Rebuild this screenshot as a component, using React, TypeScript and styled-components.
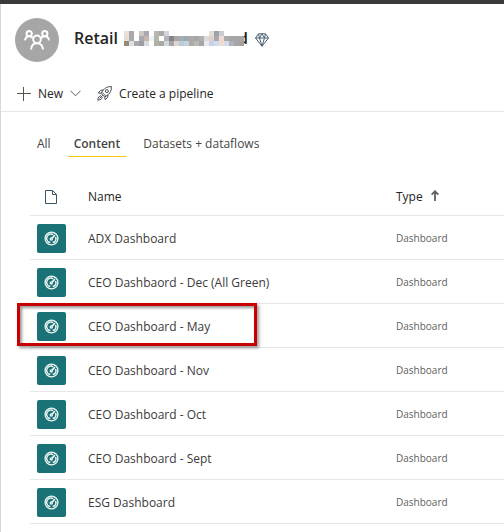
import React from "react";
import styled, { createGlobalStyle } from "styled-components";

const Global = createGlobalStyle`
  * { box-sizing: border-box; }
  body { margin: 0; background: #fff; font-family: "Open Sans", "Noto Sans", sans-serif; color: #252423; }
  button { font: inherit; color: inherit; background: none; border: 0; padding: 0; cursor: pointer; }
  svg { display: block; flex: none; }
`;

const Page = styled.div`
  min-height: 100vh;
  border-top: 4px solid #3b3a39;
  overflow: hidden;
`;
const Workspace = styled.main`
  border-left: 1px solid #d8d8d8;
  min-height: calc(100vh - 4px);
`;
const Header = styled.header`
  display: flex;
  align-items: center;
  height: 70px;
  padding: 2px 14px 0;
`;
const Avatar = styled.div`
  display: grid;
  place-items: center;
  width: 44px;
  height: 44px;
  border-radius: 50%;
  background: #a6a6a6;
`;
const Title = styled.h1`
  display: flex;
  align-items: center;
  margin: 0 0 4px 15px;
  font-size: 16px;
  line-height: 24px;
  font-weight: 600;
`;
const Redacted = styled.span`
  display: flex;
  align-items: center;
  margin-left: 6px;

  svg {
    z-index: 1;
  }
`;
const Tail = styled.span`
  margin-left: -6px;
`;
const GemIcon = styled.svg`
  margin: 3px 0 0 7px;
`;
const Toolbar = styled.div`
  display: flex;
  align-items: center;
  height: 38px;
  padding: 2px 15px 0;
  border-bottom: 1px solid #e6e6e6;
`;
const Action = styled.button`
  display: flex;
  align-items: center;
  gap: 7px;
  margin-right: 16px;
  font-size: 12px;
  line-height: 20px;
`;
const Tabs = styled.nav`
  display: flex;
  gap: 11px;
  padding: 19px 30px 0;
`;
const Tab = styled.button<{ $active?: boolean }>`
  padding: 0 6px;
  height: 26px;
  font-size: 12px;
  line-height: 24px;
  color: #484644;
  font-weight: ${(p) => (p.$active ? 600 : 400)};
  border-bottom: 1px solid ${(p) => (p.$active ? "#f2c811" : "transparent")};
`;
const Table = styled.table`
  width: calc(100% - 29px);
  margin: 21px 0 0 29px;
  border-collapse: separate;
  border-spacing: 0;
  table-layout: fixed;
`;
const HeadCell = styled.th<{ $w?: string }>`
  width: ${(p) => p.$w ?? "auto"};
  height: 38px;
  padding: 0;
  text-align: left;
  font-size: 12px;
  font-weight: 500;
  border-bottom: 1px solid #e6e6e6;
`;
const HeadLabel = styled.span`
  display: flex;
  align-items: center;
  gap: 8px;

  svg {
    margin-bottom: 2px;
  }
`;
const DocIcon = styled.svg`
  margin-left: 15px;
`;
const Row = styled.tr`
  position: relative;
`;
const Cell = styled.td<{ $muted?: boolean }>`
  height: 44px;
  padding: 1px 0 0;
  font-size: ${(p) => (p.$muted ? 10 : 12)}px;
  color: ${(p) => (p.$muted ? "#605e5c" : "#3b3a39")};
  border-bottom: 1px solid #e6e6e6;
`;
const Tile = styled.span`
  display: grid;
  place-items: center;
  width: 29px;
  height: 29px;
  margin-left: 7px;
  border-radius: 2px;
  background: #1a7276;
`;
const Highlight = styled.span`
  position: absolute;
  left: -13px;
  top: -1px;
  width: 240px;
  height: 43px;
  border: 3px solid #c80000;
  box-shadow: 2px 2px 3px #0006, inset 2px 2px 3px #0006;
  pointer-events: none;
`;

const mosaic = [
  "ebe0d8 a9a9ae ffffff cfc7bf a8a8b0 ffffff b9b7ad a9a9a9 d0d4de ffffff ffffff ffffff ffffff ffffff ffffff ffffff ffffff e6dcd6 9ea3ab c9cdd2 ffffff ffffff ffffff ffffff",
  "e5ddd5 a9a9ae ffffff aaa9ae c9b5a8 e9f3fa b5b5a8 ffffff b5b3b8 858585 a9a5a5 9fb0b8 a0a8aa a9a9a9 a9a5a2 b0b0b0 d9dde0 e0d2ca a9a9ae f0dcd0 aaaaaa a5a5a5 a5a5a5 a8a8a8",
  "958877 dde0e0 a9a9ae 9c9ca2 d5dbdf ffffff b0b0a5 a9a9a5 d0d8e0 a5a5a5 e0d5cc b8cdd8 c4d0dd aaaaaa b8b8b5 a5a5a5 e8eaf0 c8d0e2 d0dcf0 ecdcd0 d5dbe8 b0b0c0 a5a5aa a8a098",
].map((line) => line.split(" "));

function Mosaic() {
  return (
    <svg width="120" height="15" viewBox="0 0 120 15" shapeRendering="crispEdges" aria-hidden="true">
      {mosaic.map((line, y) =>
        line.map((c, x) => <rect key={`${x}-${y}`} x={x * 5} y={y * 5} width="5" height="5" fill={`#${c}`} />)
      )}
    </svg>
  );
}

function People() {
  return (
    <svg width="26" height="20" viewBox="0 0 26 20" fill="none" stroke="#fff" strokeWidth="2" aria-hidden="true">
      <circle cx="5.2" cy="3.7" r="2.600" />
      <circle cx="20.800" cy="3.7" r="2.600" />
      <circle cx="13" cy="9.4" r="3.8" />
      <path d="M1 10.300C1.400 7.800 2.900 6.300 5.200 6.300c1.700 0 2.900.7 3.700 2M25 10.300c-.4-2.500-1.900-4-4.200-4-1.700 0-2.900.7-3.700 2M7 19.500c.4-3.800 2.700-6.200 6-6.200s5.600 2.400 6 6.200" />
    </svg>
  );
}

function Gem() {
  return (
    <GemIcon width="14" height="14" viewBox="0 0 14 14" fill="none" stroke="#4d6175" strokeWidth="1" strokeLinejoin="round" aria-label="Premium capacity">
      <path d="M3.500.8h7L13.500 5 7 13.200.5 5zM.5 5h13M3.500.8 4.500 5 7 13.200 9.500 5l1-4.200M4.500 5 7 .8 9.500 5" />
    </GemIcon>
  );
}

function Plus() {
  return (
    <svg width="15" height="14" viewBox="0 0 15 14" stroke="#4f5b45" aria-hidden="true">
      <path d="M1 6.500h14M7.500 0v14" />
    </svg>
  );
}

function Chevron() {
  return (
    <svg width="11" height="7" viewBox="0 0 11 7" fill="none" stroke="#605e5c" aria-hidden="true">
      <path d="m.5.8 5 5 5-5" />
    </svg>
  );
}

function Rocket() {
  return (
    <svg width="15" height="15" viewBox="0 0 15 15" fill="none" stroke="#4a4f5a" strokeWidth="1" strokeLinejoin="round" aria-hidden="true">
      <path d="M14.400.6c-3.600-.2-6.200 1-8.100 3.400L3.900 7.200l3.900 3.900L11 8.700c2.400-1.900 3.600-4.500 3.400-8.100z" />
      <path d="M6.300 4 3.500 4.400 1.300 7l2.600.2M11 8.700l-.4 2.800L8 13.700l-.2-2.600M4.900 6.200l3.900 3.900M3.900 9.600C2.200 9.800 1 11.600.8 14.200c2.600-.2 4.400-1.400 4.600-3.100M2.500 12.500l3.300-3.300" />
      <circle cx="9.900" cy="5.100" r="1.500" />
    </svg>
  );
}

function Doc() {
  return (
    <DocIcon width="12" height="14" viewBox="0 0 12 14" fill="none" stroke="#3b5568" aria-hidden="true">
      <path d="M.5.5h7l4 4v9H.5zM7.500.5v4h4" />
    </DocIcon>
  );
}

function SortUp() {
  return (
    <svg width="8" height="11" viewBox="0 0 8 11" fill="none" stroke="#605e5c" strokeWidth="1.800" aria-hidden="true">
      <path d="M4 11V1.300M.6 4.700 4 1.300l3.400 3.400" />
    </svg>
  );
}

function Gauge() {
  return (
    <svg width="15" height="15" viewBox="0 0 14 14" fill="none" stroke="#f0f8f8" aria-hidden="true">
      <circle cx="7" cy="7" r="6" strokeWidth="1.200" />
      <path d="M4.600 10.500A4.100 4.100 0 0 1 8.600 3.300M10.800 5.600a4.100 4.100 0 0 1-1.400 4.900" strokeWidth="1.300" />
      <path d="M4.300 10.500h1.600M9.700 10.500H8.100" strokeWidth="1.300" />
      <circle cx="6.800" cy="7.400" r="1" strokeWidth="1.200" />
      <path d="M7.500 6.600 10.200 3.900" strokeWidth="1.600" />
    </svg>
  );
}

const items = [
  "ADX Dashboard",
  "CEO Dashbaord - Dec (All Green)",
  "CEO Dashboard - May",
  "CEO Dashboard - Nov",
  "CEO Dashboard - Oct",
  "CEO Dashboard - Sept",
  "ESG Dashboard",
];
const highlighted = "CEO Dashboard - May";

export default function App() {
  return (
    <Page>
      <Global />
      <Workspace>
        <Header>
          <Avatar><People /></Avatar>
          <Title>
            Retail
            <Redacted><Mosaic /><Tail>d</Tail></Redacted>
            <Gem />
          </Title>
        </Header>
        <Toolbar>
          <Action><Plus />New<Chevron /></Action>
          <Action><Rocket />Create a pipeline</Action>
        </Toolbar>
        <Tabs>
          <Tab>All</Tab>
          <Tab $active>Content</Tab>
          <Tab>Datasets + dataflows</Tab>
        </Tabs>
        <Table>
          <thead>
            <tr>
              <HeadCell $w="58px" aria-label="Kind"><Doc /></HeadCell>
              <HeadCell>Name</HeadCell>
              <HeadCell $w="108px"><HeadLabel>Type<SortUp /></HeadLabel></HeadCell>
            </tr>
          </thead>
          <tbody>
            {items.map((name) => (
              <Row key={name}>
                <Cell>
                  <Tile><Gauge /></Tile>
                  {name === highlighted && <Highlight />}
                </Cell>
                <Cell>{name}</Cell>
                <Cell $muted>Dashboard</Cell>
              </Row>
            ))}
          </tbody>
        </Table>
      </Workspace>
    </Page>
  );
}
